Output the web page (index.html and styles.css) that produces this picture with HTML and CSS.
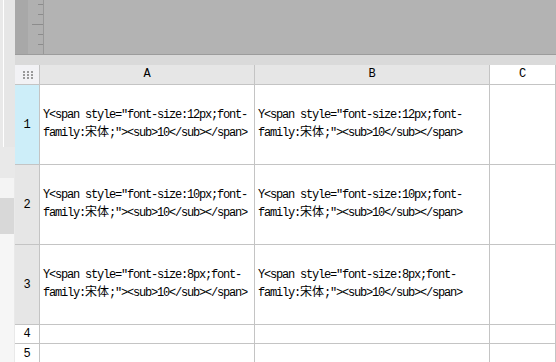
FILE: index.html
```html
<!DOCTYPE html>
<html>
<head>
<meta charset="utf-8">
<link rel="stylesheet" href="styles.css">
</head>
<body>
<div class="side">
  <div class="side-top"></div>
  <div class="side-gap"></div>
  <div class="side-light"></div>
  <div class="side-dark"></div>
  <div class="side-rest"></div>
</div>
<div class="main">
  <div class="canvas">
    <div class="ruler-dark"></div>
    <div class="ruler">
      <span class="tick"></span>
      <span class="tick"></span>
      <span class="tick long"></span>
      <span class="tick"></span>
      <span class="tick"></span>
    </div>
    <div class="page-area"></div>
  </div>
  <div class="band"></div>
  <div class="grid">
    <div class="corner">
      <svg width="10" height="8" viewBox="0 0 10 8">
        <g fill="#9a9a9a">
          <rect x="0" y="0" width="2" height="2"/><rect x="4" y="0" width="2" height="2"/><rect x="8" y="0" width="2" height="2"/>
          <rect x="0" y="3" width="2" height="2"/><rect x="4" y="3" width="2" height="2"/><rect x="8" y="3" width="2" height="2"/>
          <rect x="0" y="6" width="2" height="2"/><rect x="4" y="6" width="2" height="2"/><rect x="8" y="6" width="2" height="2"/>
        </g>
      </svg>
    </div>
    <div class="colhead">A</div>
    <div class="colhead">B</div>
    <div class="colhead plain">C</div>

    <div class="rowhead sel">1</div>
    <div class="cell"><p class="txt">Y&lt;span style="font-size:12px;font-<br>family:<span class="cjk">宋体</span>;"&gt;&lt;sub&gt;10&lt;/sub&gt;&lt;/span&gt;</p></div>
    <div class="cell"><p class="txt">Y&lt;span style="font-size:12px;font-<br>family:<span class="cjk">宋体</span>;"&gt;&lt;sub&gt;10&lt;/sub&gt;&lt;/span&gt;</p></div>
    <div class="cell"></div>

    <div class="rowhead">2</div>
    <div class="cell"><p class="txt">Y&lt;span style="font-size:10px;font-<br>family:<span class="cjk">宋体</span>;"&gt;&lt;sub&gt;10&lt;/sub&gt;&lt;/span&gt;</p></div>
    <div class="cell"><p class="txt">Y&lt;span style="font-size:10px;font-<br>family:<span class="cjk">宋体</span>;"&gt;&lt;sub&gt;10&lt;/sub&gt;&lt;/span&gt;</p></div>
    <div class="cell"></div>

    <div class="rowhead">3</div>
    <div class="cell"><p class="txt">Y&lt;span style="font-size:8px;font-<br>family:<span class="cjk">宋体</span>;"&gt;&lt;sub&gt;10&lt;/sub&gt;&lt;/span&gt;</p></div>
    <div class="cell"><p class="txt">Y&lt;span style="font-size:8px;font-<br>family:<span class="cjk">宋体</span>;"&gt;&lt;sub&gt;10&lt;/sub&gt;&lt;/span&gt;</p></div>
    <div class="cell"></div>

    <div class="rowhead plain">4</div>
    <div class="cell"></div>
    <div class="cell"></div>
    <div class="cell"></div>

    <div class="rowhead plain">5</div>
    <div class="cell"></div>
    <div class="cell"></div>
    <div class="cell"></div>
  </div>
</div>
</body>
</html>
```

FILE: styles.css
```css
html, body {
  margin: 0;
  padding: 0;
}
body {
  width: 556px;
  height: 362px;
  overflow: hidden;
  display: flex;
  background: #ffffff;
  font-family: "Liberation Mono", "Noto Sans CJK SC", monospace;
  color: #000;
}
.side {
  width: 15px;
  flex: none;
  display: flex;
  flex-direction: column;
  background: #e9e9e9;
}
.side-top {
  height: 147px;
  margin-left: 3px;
  border-left: 1px solid #ffffff;
  background: #e6e6e6;
}
.side-gap { height: 31px; }
.side-light { height: 20px; background: #f4f4f4; margin-right: 1px; }
.side-dark { height: 36px; background: #d8d8d8; margin-right: 1px; }
.side-rest { flex: 1; background: #f6f6f6; margin-right: 1px; }

.main {
  flex: 1;
  display: flex;
  flex-direction: column;
  min-width: 0;
}
.canvas {
  height: 54px;
  flex: none;
  display: flex;
  border-bottom: 1px solid #9c9c9c;
  background: #b3b3b3;
}
.ruler-dark {
  width: 13px;
  background: #a8a8a8;
}
.ruler {
  width: 16px;
  background: #b0b0b0;
  border-right: 1px solid #989898;
  display: flex;
  flex-direction: column;
  align-items: flex-end;
  padding-top: 4px;
  gap: 9px;
  box-sizing: border-box;
}
.tick {
  display: block;
  width: 5px;
  height: 1px;
  background: #8c8c8c;
}
.tick.long { width: 11px; }
.page-area { flex: 1; }
.band {
  height: 10px;
  flex: none;
  background: #dadada;
}
.grid {
  flex: 1;
  display: grid;
  grid-template-columns: 25px 215px 235px 1fr;
  grid-template-rows: 20px 80px 80px 80px 19px 20px;
  background: #ffffff;
  min-width: 0;
  overflow: hidden;
}
.grid > div {
  border-right: 1px solid #c4c4c4;
  border-bottom: 1px solid #c4c4c4;
  box-sizing: border-box;
  font-size: 12px;
  min-width: 0;
}
.corner {
  background: #f2f2f5;
  display: flex;
  align-items: center;
  justify-content: center;
  padding-top: 1px;
}
.corner svg { display: block; margin-left: 1px; }
.colhead {
  background: #e6e6e6;
  display: flex;
  align-items: center;
  justify-content: center;
  line-height: 15px;
}
.colhead.plain { background: #ffffff; }
.rowhead {
  background: #e6e6e6;
  display: flex;
  align-items: center;
  justify-content: center;
}
.rowhead.sel { background: #cdeef9; }
.rowhead.plain { background: #ffffff; }
.cell {
  display: flex;
  align-items: center;
  padding-left: 3px;
  overflow: hidden;
}
.cell + .cell + .cell { padding-left: 2px; }
.txt {
  margin: 0;
  line-height: 15px;
  letter-spacing: -1.2px;
  white-space: nowrap;
}
.cjk {
  font-family: "Noto Sans CJK SC", sans-serif;
  letter-spacing: 0;
}
```
